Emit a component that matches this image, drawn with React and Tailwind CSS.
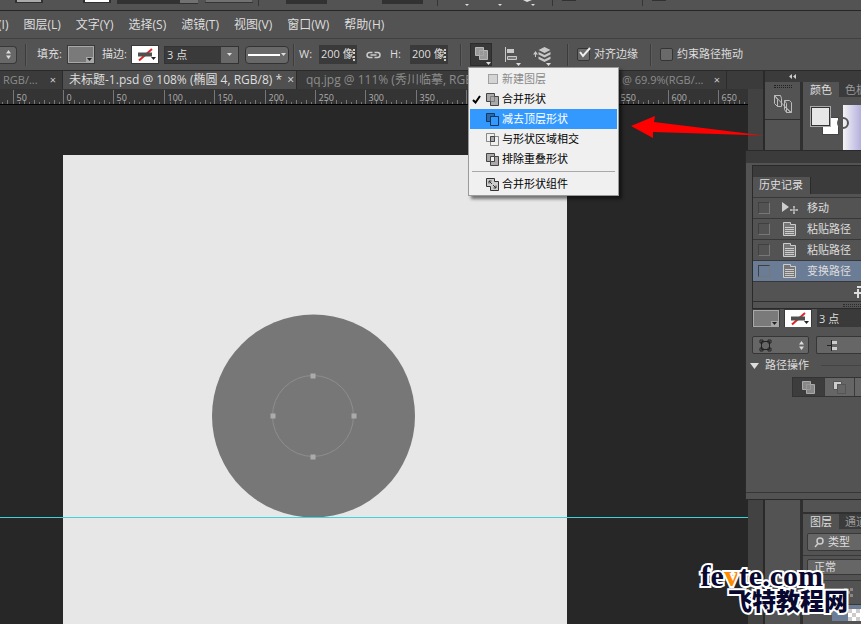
import React from 'react';

const MENUS = ['(I)', '图层(L)', '文字(Y)', '选择(S)', '滤镜(T)', '视图(V)', '窗口(W)', '帮助(H)'];

const PATH_OPS = [
  { label: '新建图层', icon: 'new', disabled: true },
  { label: '合并形状', icon: 'unite', checked: true },
  { label: '减去顶层形状', icon: 'subtract', active: true },
  { label: '与形状区域相交', icon: 'intersect' },
  { label: '排除重叠形状', icon: 'exclude' },
];

const HISTORY = [
  { label: '移动', icon: 'move' },
  { label: '粘贴路径', icon: 'doc' },
  { label: '粘贴路径', icon: 'doc' },
  { label: '变换路径', icon: 'doc', active: true },
];

function ShapeIcon({ type, line = '#333', fill = '#aaa', size = 13 }) {
  return (
    <svg width={size} height={size} viewBox="0 0 13 13" fill="none" stroke={line} className="shrink-0">
      {type === 'new' && <rect x="2.5" y="1.5" width="9" height="9" fill="#d4d4d4" stroke="#a0a0a0" />}
      {type === 'unite' && (
        <>
          <path d="M.5.5h8v3h4v9h-8v-4h-4z" fill={fill} />
          <path d="M4.5 8.500v-5h4v5z" opacity=".45" />
        </>
      )}
      {type === 'subtract' && (
        <>
          <path d="M.5.5h8v3h-4v5h-4z" fill={fill} />
          <path d="M4.5 3.500h8v9h-8z" />
        </>
      )}
      {type === 'intersect' && (
        <>
          <path d="M.5.500h8v8h-8zM4.500 3.500h8v9h-8z" opacity=".6" />
          <path d="M4.500 3.500h4v5h-4z" fill={fill} />
        </>
      )}
      {type === 'exclude' && (
        <>
          <path d="M.5.500h8v8h-8zM4.500 3.500h8v9h-8z" fill={fill} />
          <path d="M4.500 3.500h4v5h-4z" fill="#f0f0f0" />
        </>
      )}
      {type === 'merge' && (
        <>
          <path d="M.5.500h8v3h4v9h-8v-4h-4z" fill="#ccc" />
          <path d="M3 3l3 3M10 10L7 7M3 5.500V3h2.500M10 7.500V10H7.500" />
        </>
      )}
    </svg>
  );
}

function Caret({ className = '' }) {
  return (
    <svg width="5" height="3" viewBox="0 0 5 3" className={className}>
      <path d="M0 0h5L2.500 3z" fill="currentColor" />
    </svg>
  );
}

function UpDown() {
  return (
    <svg width="5" height="9" viewBox="0 0 5 9" fill="#ddd">
      <path d="M0 3.500h5L2.500 0zM0 5.500h5L2.500 9z" />
    </svg>
  );
}

function FillSwatch({ label }) {
  return (
    <button aria-label={label} className="relative h-[17px] w-[26px] shrink-0 border border-[#a8a8a8] bg-[#7a7a7a] outline outline-[#3a3a3a]">
      <span className="absolute right-0 bottom-0 flex h-[5px] w-[7px] items-center justify-center bg-[#a8a8a8] text-[#222]">
        <Caret />
      </span>
    </button>
  );
}

function StrokeSwatch({ label }) {
  return (
    <button aria-label={label} className="h-[17px] w-[26px] shrink-0 bg-white outline outline-[#3a3a3a]">
      <svg width="26" height="17" viewBox="0 0 26 17">
        <path d="M7 14.500L20 3" stroke="#e52222" strokeWidth="2" />
        <path d="M6 6.500h14v4H6z" fill="#505050" />
        <path d="M19 11h5l-2.500 3z" fill="#222" />
      </svg>
    </button>
  );
}

function Divider() {
  return <span className="h-[22px] w-0.5 shrink-0 border-l border-[#3c3c3c] bg-[#5c5c5c]" />;
}

function TopStrip() {
  return (
    <svg className="block h-[10px] w-full" height="10">
      <path d="M15 0h28v3H15zM83 0h28v3H83z" fill="#303030" />
      <path d="M17 0h24v2H17z" fill="#aaa" />
      <path d="M85 0h24v2H85z" fill="#fff" />
      <path d="M117 0h81v4h-81zM286 0h41v4h-41zM382 0h41v4h-41zM562 0h14v1h-14zM652 0h14v1h-14z" fill="#323232" />
      <path d="M180 0h18v3h-18zM206 0h46v2h-46z" fill="#717171" />
      <path d="M205 2h48v1h-48zM258 0h1v6h-1zM437 0h1v6h-1zM552 0h1v6h-1zM642 0h1v6h-1z" fill="#353535" />
      <path d="M465 4h4l-2 2zM498 4h4l-2 2zM531 4h4l-2 2zM523 0h9l-5 2z" fill="#ddd" />
    </svg>
  );
}

function MenuBar() {
  return (
    <div className="border-t border-[#262626]">
      <nav className="-ml-0.5 flex h-[27px] items-center gap-[15px] text-[12px] whitespace-nowrap">
        {MENUS.map(m => (
          <button key={m}>{m}</button>
        ))}
      </nav>
    </div>
  );
}

function PathMenu() {
  return (
    <div role="menu" className="absolute top-[24px] -left-0.5 z-30 w-[151px] border border-[#9a9a9a] bg-[#f0f0f0] px-px py-px text-[11px] text-black shadow-[3px_3px_3px_rgba(0,0,0,0.5)]">
      {PATH_OPS.map(op => (
        <button
          key={op.label}
          role="menuitem"
          disabled={op.disabled}
          className={`flex h-5 w-full items-center gap-[3px] ${op.active ? 'bg-[#3399ff] text-white' : ''} ${op.disabled ? 'text-[#8a8a8a]' : ''}`}
        >
          <span className="flex w-[13px] justify-center">
            {op.checked && (
              <svg width="9" height="9" viewBox="0 0 9 9" fill="none" stroke="#000" strokeWidth="2">
                <path d="M1 5l2.500 2.500L8 1" />
              </svg>
            )}
          </span>
          <ShapeIcon type={op.icon} line={op.active ? '#12395f' : '#444'} fill={op.active ? '#2a6cab' : '#aaa'} />
          {op.label}
        </button>
      ))}
      <hr className="mx-0.5 my-0.5 border-[#a8a8a8]" />
      <button role="menuitem" className="flex h-5 w-full items-center gap-[3px]">
        <span className="w-[13px]" />
        <ShapeIcon type="merge" />
        合并形状组件
      </button>
    </div>
  );
}

function SizeField({ id, label }) {
  return (
    <>
      <label htmlFor={id} className="w-5 shrink-0">{label}</label>
      <span className="flex h-[19px] w-[38px] shrink-0 items-center overflow-hidden bg-[#3a3a3a]">
        <input id={id} defaultValue="200 像素" className="w-[34px] bg-transparent pl-0.5 outline-none" />
        <span className="h-3 border-r-2 border-dotted border-[#ccc]" />
      </span>
    </>
  );
}

function OptionsBar() {
  return (
    <div className="flex h-8 items-center border-t border-[#404040] text-[11px] whitespace-nowrap">
      <button aria-label="预设" className="flex h-[18px] w-[17px] shrink-0 items-center justify-center rounded-r border border-l-0 border-[#383838] bg-[#686868]">
        <UpDown />
      </button>
      <div className="ml-2 flex shrink-0 items-center">
        <Divider />
        <span className="ml-2.5 w-[31px]">填充:</span>
        <FillSwatch label="填充" />
        <span className="ml-2 w-[30px]">描边:</span>
        <StrokeSwatch label="描边" />
        <span className="relative ml-1.5">
          <select aria-label="描边宽度" className="h-[18px] w-[75px] appearance-none border border-[#333] bg-[#3a3a3a] pl-0.5">
            <option>3 点</option>
          </select>
          <span className="pointer-events-none absolute top-px right-px flex h-4 w-[17px] items-center justify-center bg-[#686868]">
            <Caret />
          </span>
        </span>
        <button aria-label="线型" className="ml-1.5 flex h-[18px] w-11 items-center justify-between rounded-sm border border-[#333] bg-[#686868] px-0.5">
          <span className="h-0.5 w-8 bg-white" />
          <Caret />
        </button>
      </div>
      <div className="mr-3 ml-1 flex shrink-0 items-center">
        <Divider />
        <span className="w-1" />
        <SizeField id="shape-w" label="W:" />
        <button aria-label="链接宽高" className="mx-[9px]">
          <svg width="15" height="10" viewBox="0 0 15 10" fill="none" stroke="#ccc" strokeWidth="1.500">
            <path d="M6.500 2.500h-3a2.500 2.500 0 0 0 0 5h3M8.500 2.500h3a2.500 2.500 0 0 1 0 5h-3M4.500 5h6" />
          </svg>
        </button>
        <SizeField id="shape-h" label="H:" />
      </div>
      <Divider />
      <div className="relative ml-2 shrink-0">
        <button aria-label="路径操作" aria-haspopup="menu" className="relative flex h-[23px] w-[22px] items-center justify-center border border-[#2c2c2c] bg-[#383838] pb-0.5">
          <ShapeIcon type="unite" line="#b8b8b8" fill="#999" />
          <Caret className="absolute right-0 bottom-0" />
        </button>
        <PathMenu />
      </div>
      <button aria-label="路径对齐方式" className="relative ml-3 flex h-[23px] w-[17px] shrink-0 items-center">
        <svg width="15" height="15" viewBox="0 0 15 15" fill="#c8c8c8">
          <path d="M1 0h1v15H1zM3 2h7v4H3z" />
          <path d="M3.500 9.500h9v3h-9z" fill="#777" stroke="#c8c8c8" />
        </svg>
        <Caret className="absolute right-0 bottom-0" />
      </button>
      <button aria-label="路径排列方式" className="relative mr-4 ml-3 flex h-[23px] w-[18px] shrink-0 items-center">
        <svg width="18" height="16" viewBox="0 0 18 16" fill="#c8c8c8">
          <path d="M11.500 0l6 3-6 3-6-3zM5.500 5l6 3 6-3v2.500l-6 3-6-3zM5.500 9.500l6 3 6-3V12l-6 3-6-3zM2.500 4L5 7.500H0zM2 7h1v3H2z" />
        </svg>
        <Caret className="absolute right-0 bottom-0" />
      </button>
      <Divider />
      <label className="mr-3 ml-2 flex shrink-0 items-center gap-1">
        <span className="relative h-[13px] w-[13px]">
          <input type="checkbox" defaultChecked className="block h-[13px] w-[13px] appearance-none rounded-xs border border-[#353535] bg-[#6a6a6a]" />
          <svg className="pointer-events-none absolute -top-px left-0.5" width="12" height="12" viewBox="0 0 12 12" fill="none" stroke="#eee" strokeWidth="2">
            <path d="M1 5l3 4L11 1" />
          </svg>
        </span>
        对齐边缘
      </label>
      <Divider />
      <label className="ml-2 flex shrink-0 items-center gap-1">
        <input type="checkbox" className="h-[13px] w-[13px] appearance-none rounded-xs border border-[#353535] bg-[#6a6a6a]" />
        约束路径拖动
      </label>
    </div>
  );
}

function DocTabs() {
  return (
    <div className="flex h-[18px] shrink-0 items-stretch overflow-hidden bg-[#3b3b3b] text-[11px] whitespace-nowrap text-[#8c8c8c]">
      <div className="flex w-[63px] shrink-0 items-center justify-between border-r border-[#2b2b2b] px-[3px] pr-1.5">
        RGB/... <button aria-label="关闭" className="text-[#ccc]">×</button>
      </div>
      <div className="flex w-[233px] shrink-0 items-center justify-between bg-[#505050] pr-0.5 pl-1.5 text-[12px] text-[#dedede]">
        未标题-1.psd @ 108% (椭圆 4, RGB/8) * <button aria-label="关闭">×</button>
      </div>
      <div className="flex w-[320px] shrink-0 items-center border-l border-[#2b2b2b] pl-[9px] text-[12px]">qq.jpg @ 111% (秀川临摹, RGB/8) *</div>
      <div className="flex w-[111px] shrink-0 items-center justify-between border-r border-[#2b2b2b] pr-1.5 pl-1.5">
        @ 69.9%(RGB/... <button aria-label="关闭" className="text-[#ccc]">×</button>
      </div>
    </div>
  );
}

const UNIT = 50.4;

function Ruler() {
  const majors = [];
  for (let i = -1; i < 14; i++) majors.push(i);
  return (
    <svg className="mr-[15px] block h-4 shrink-0 border-b border-black bg-[#343434]" height="16">
      <path d="M2.500 13v3M7.500 11v5" stroke="#777" />
      {majors.map(i => {
        const x = Math.round(63 + i * UNIT) + 0.5;
        return (
          <g key={i} stroke="#777">
            <path d={`M${x} 1v15`} />
            {[1, 2, 3, 4, 5, 6, 7, 8, 9].map(n => (
              <path key={n} d={`M${Math.round(x + (n * UNIT) / 10) + 0.5} ${n % 2 ? 13 : 11}v5`} />
            ))}
            <text x={x + 3} y="12" stroke="none" fill="#b0b0b0" fontSize="9">{Math.abs(i * 50)}</text>
          </g>
        );
      })}
    </svg>
  );
}

function Canvas() {
  return (
    <main className="relative mr-[15px] flex-1 overflow-hidden bg-[#272727]">
      <div className="absolute top-[50px] bottom-0 left-[63px] w-[504px] bg-[#e7e7e7]">
        <svg className="absolute top-[158px] left-[148px]" width="206" height="206" viewBox="0 0 206 206">
          <circle cx="102.500" cy="103" r="101.500" fill="#777" />
          <circle cx="102" cy="103" r="40.500" fill="none" stroke="#8e8e8e" />
          <path d="M99.500 60.500h5v5h-5zM99.500 141.500h5v5h-5zM59.500 100.500h5v5h-5zM140.500 100.500h5v5h-5z" fill="#ababab" />
        </svg>
      </div>
      <div className="absolute top-[412px] h-px w-full bg-[#3fd2da]" />
    </main>
  );
}

function HistoryIcon({ type }) {
  if (type === 'move') {
    return (
      <svg width="16" height="14" viewBox="0 0 16 14" fill="#ccc">
        <path d="M0 1l7 5-7 5z" />
        <path d="M12 5v8M8 9h8M11 6h2M11 12h2M9 8v2M15 8v2" stroke="#ccc" />
      </svg>
    );
  }
  return (
    <svg width="16" height="14" viewBox="0 0 16 14">
      <path d="M1.500.500h7v2h5v11h-12z" fill="#777" stroke="#ccc" />
      <path d="M3 5.500h9M3 7.500h9M3 9.500h9M3 11.500h9" stroke="#ccc" />
    </svg>
  );
}

function HistoryPanel() {
  return (
    <section className="absolute top-[14px] right-0 left-1.5 border border-r-0 border-[#2a2a2a] bg-[#535353] text-[11px] whitespace-nowrap">
      <div className="h-[11px] bg-[#3b3b3b]" />
      <div className="flex h-[17px] bg-[#3b3b3b]">
        <h2 className="flex w-[58px] items-center border-r border-[#2a2a2a] bg-[#535353] pl-1.5">历史记录</h2>
      </div>
      <ul className="mt-[3px] border-t border-[#383838]">
        {HISTORY.map((h, i) => (
          <li key={i} className={`flex h-[21px] items-center border-b border-[#383838] ${h.active ? 'bg-[#6b7c96]' : ''}`}>
            <input type="checkbox" aria-label={`历史源 ${i + 1}`} className="ml-[5px] h-3 w-3 shrink-0 appearance-none border border-t-[#404040] border-r-[#777] border-b-[#777] border-l-[#404040]" />
            <span className="ml-3 w-[25px] shrink-0"><HistoryIcon type={h.icon} /></span>
            {h.label}
          </li>
        ))}
      </ul>
      <div className="flex h-[19px] items-center justify-end overflow-hidden">
        <svg width="7" height="12" viewBox="0 0 7 12" fill="none" stroke="#ddd" strokeWidth="2">
          <path d="M0 7h7M4 3v9M3 1h4" />
        </svg>
      </div>
      <div className="flex h-[7px] items-center justify-end border-t border-[#303030]">
        <span className="h-[3px] w-[18px] border-y border-dotted border-[#2c2c2c]" />
      </div>
    </section>
  );
}

function PropertiesPanel() {
  return (
    <section className="absolute top-[150px] right-0 z-10 flex h-[350px] w-[116px] flex-col border border-r-0 border-[#2a2a2a] bg-[#535353] text-[11px] whitespace-nowrap">
      <div className="h-3 shrink-0 bg-[#3b3b3b]" />
      <HistoryPanel />
      <div className="mt-[146px] flex h-[18px] shrink-0 items-center gap-1.5 overflow-hidden pl-[7px]">
        <FillSwatch label="填充颜色" />
        <StrokeSwatch label="描边颜色" />
        <input aria-label="描边粗细" defaultValue="3 点" className="h-[18px] min-w-0 flex-1 bg-[#3a3a3a] pl-0.5 outline-none" />
      </div>
      <div className="mt-[9px] flex h-[18px] shrink-0 gap-[7px] pl-[6px]">
        <button aria-label="变换" className="flex w-[57px] items-center justify-between rounded-xs border border-[#363636] bg-[#666] px-1">
          <svg width="16" height="13" viewBox="0 0 16 13" fill="none" stroke="#222">
            <path d="M4.500 2.500h8v8h-8zM3 1h3v3H3zM11 1h3v3h-3zM3 9h3v3H3zM11 9h3v3h-3z" />
          </svg>
          <UpDown />
        </button>
        <button aria-label="对齐" className="flex flex-1 items-center rounded-l-xs border border-r-0 border-[#363636] bg-[#666] pl-2.5">
          <svg width="10" height="11" viewBox="0 0 10 11">
            <path d="M4.500 0v11" stroke="#222" />
            <path d="M5 1h5v3H5zM5 7h5v3H5z" fill="#ccc" />
            <path d="M0 5.500h5" stroke="#222" />
          </svg>
        </button>
      </div>
      <h2 className="mt-[3px] flex h-[17px] shrink-0 items-center pl-1">
        <svg width="9" height="6" viewBox="0 0 9 6" className="mr-1.5"><path d="M0 0h9L4.500 6z" fill="#ddd" /></svg>
        路径操作
        <span className="ml-3 h-px flex-1 bg-[#444]" />
      </h2>
      <div className="mt-[3px] ml-[46px] flex h-5 shrink-0 border border-r-0 border-[#333]">
        <button aria-label="合并形状" className="flex w-[31px] items-center justify-center bg-[#3d3d3d]">
          <ShapeIcon type="unite" line="#aaa" fill="#888" />
        </button>
        <button aria-label="减去顶层形状" className="flex w-[31px] items-center justify-center border-x border-[#3a3a3a] bg-[#666]">
          <ShapeIcon type="subtract" line="#555" fill="#ccc" />
        </button>
        <span className="flex-1 bg-[#666]" />
      </div>
      <div className="mt-auto h-[7px] shrink-0 border-t border-[#363636]" />
    </section>
  );
}

function Dock() {
  return (
    <aside className="flex w-[98px] shrink-0 flex-col overflow-hidden border-l-2 border-[#2a2a2a] text-[11px] whitespace-nowrap">
      <div className="flex h-[11px] shrink-0 items-center bg-[#3b3b3b] pl-6">
        <svg width="7" height="5" viewBox="0 0 7 5" fill="#ccc"><path d="M3 0v5L0 2.500zM7 0v5L4 2.500z" /></svg>
      </div>
      <div className="flex flex-1">
        <div className="w-[38px] shrink-0 border-r-3 border-[#303030] bg-[#535353]">
          <button aria-label="历史记录" className="flex h-[38px] w-full flex-col items-center gap-1.5 border-b border-[#2e2e2e] pt-[3px]">
            <span className="h-[3px] w-[18px] border-y border-dotted border-[#222]" />
            <svg width="20" height="20" viewBox="0 0 20 20" fill="none" stroke="#bbb">
              <path d="M1.500 1.500h6l1 3v8h-4l-3-3zM1.500 1.500l3 4v7M1.500 1.500L17.500 18.500M11.500 15.500v-9h5l2 2v10h-5zM11.500 6.500l2 3v9M11.500 12.500l7 6" />
            </svg>
          </button>
        </div>
        <div className="flex min-w-0 flex-1 flex-col">
          <section className="h-[430px] shrink-0 overflow-hidden">
            <div className="flex h-[15px] bg-[#3b3b3b] text-[#999]">
              <button className="w-9 shrink-0 bg-[#535353] text-[#ddd]">颜色</button>
              <button className="pl-1.5">色板</button>
            </div>
            <div className="flex pt-2 pl-2">
              <div className="relative h-8 w-8 shrink-0">
                <span className="absolute right-1 bottom-0.5 h-[18px] w-[17px] border border-[#444] bg-white" />
                <span className="absolute top-0.5 left-0 h-[19px] w-[19px] border border-[#333] bg-[#e7e7e7] outline outline-[#aaa]" />
              </div>
              <div className="relative h-[50px] flex-1 bg-linear-to-r from-[#f4f4f4] to-[#b4b0de]">
                <span className="absolute top-3 -left-1.5 h-3 w-3 rounded-full border-2 border-[#555]" />
              </div>
            </div>
          </section>
          <section className="flex-1 border-t-2 border-[#303030]">
            <div className="flex h-[15px] bg-[#3b3b3b] text-[#999]">
              <button className="w-9 shrink-0 bg-[#535353] text-[#ddd]">图层</button>
              <button className="pl-1.5">通道</button>
            </div>
            <button className="mt-1 ml-1 flex h-[18px] w-[70px] items-center gap-1 rounded-xs border border-[#383838] bg-[#666] pl-1.5">
              <svg width="10" height="11" viewBox="0 0 10 11" fill="none" stroke="#ccc" strokeWidth="1.500"><circle cx="6" cy="4" r="3" /><path d="M4 6.500L1 10" /></svg>
              类型
            </button>
            <div className="mt-1 border-t border-[#383838] pt-[3px] pl-1">
              <button className="flex h-4 w-[70px] items-center rounded-xs border border-[#383838] bg-[#666] pl-1.5">正常</button>
            </div>
            <div className="mt-[5px] flex h-[24px] items-center justify-end border-t border-[#383838] pr-2">
              <svg width="9" height="9" viewBox="0 0 9 9" fill="#888"><path d="M0 0h3v3H0zM6 0h3v3H6zM3 3h3v3H3zM0 6h3v3H0zM6 6h3v3H6z" /></svg>
            </div>
            <div className="flex h-[17px] items-end justify-end overflow-hidden border-t border-[#383838]">
              <span className="flex h-full w-[29px] items-end justify-end bg-[#6b7c96]">
                <svg width="13" height="12" viewBox="0 0 13 12" fill="#ccc">
                  <path d="M0 0h13v12H0z" fill="#fff" />
                  <path d="M0 0h4v4H0zM8 0h4v4H8zM4 4h4v4H4zM0 8h4v4H0zM8 8h4v4H8z" />
                </svg>
              </span>
            </div>
          </section>
        </div>
      </div>
    </aside>
  );
}

function Watermark() {
  return (
    <div className="pointer-events-none absolute right-[13px] bottom-[11px] z-40 flex flex-col items-end font-black text-[#080830] [paint-order:stroke_fill] [-webkit-text-stroke:4px_white]">
      <div className="mr-[25px] font-['Liberation_Serif',serif] text-[30px] leading-[25px] font-bold">
        fe<span className="text-[#ff8a00]">v</span>te.com
      </div>
      <div className="text-[24px] leading-[25px]">飞特教程网</div>
    </div>
  );
}

export default function App() {
  return (
    <div className="relative flex h-screen w-full flex-col overflow-hidden bg-[#535353] font-['Open_Sans','Noto_Sans_CJK_SC',sans-serif] text-[#dedede]">
      <header className="relative z-20 shrink-0">
        <TopStrip />
        <MenuBar />
        <OptionsBar />
      </header>
      <div className="flex min-h-0 flex-1 border-t border-[#2a2a2a]">
        <div className="flex min-w-0 flex-1 flex-col bg-[#424242]">
          <DocTabs />
          <Ruler />
          <Canvas />
        </div>
        <Dock />
      </div>
      <PropertiesPanel />
      <svg className="pointer-events-none absolute top-[116px] left-[631px] z-20" width="134" height="23" viewBox="0 0 134 23">
        <path d="M0 10L24 0l-1 6 110 13.500L22 16v6z" fill="#f00" />
      </svg>
      <Watermark />
    </div>
  );
}
